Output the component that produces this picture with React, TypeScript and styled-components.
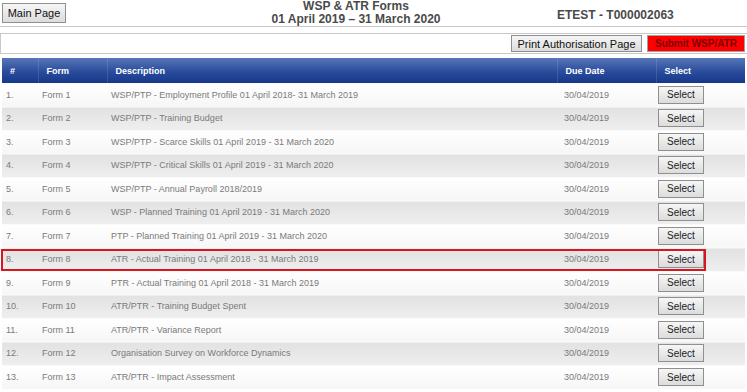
import styled, { createGlobalStyle } from 'styled-components';

const GlobalStyle = createGlobalStyle`
  body {
    margin: 0;
    background: #fff;
    font-family: "Liberation Sans", Arial, sans-serif;
  }
`;

interface FormRow {
  num: string;
  form: string;
  description: string;
  due: string;
  highlight?: boolean;
}

const rows: FormRow[] = [
  { num: '1.', form: 'Form 1', description: 'WSP/PTP - Employment Profile 01 April 2018- 31 March 2019', due: '30/04/2019' },
  { num: '2.', form: 'Form 2', description: 'WSP/PTP - Training Budget', due: '30/04/2019' },
  { num: '3.', form: 'Form 3', description: 'WSP/PTP - Scarce Skills 01 April 2019 - 31 March 2020', due: '30/04/2019' },
  { num: '4.', form: 'Form 4', description: 'WSP/PTP - Critical Skills 01 April 2019 - 31 March 2020', due: '30/04/2019' },
  { num: '5.', form: 'Form 5', description: 'WSP/PTP - Annual Payroll 2018/2019', due: '30/04/2019' },
  { num: '6.', form: 'Form 6', description: 'WSP - Planned Training 01 April 2019 - 31 March 2020', due: '30/04/2019' },
  { num: '7.', form: 'Form 7', description: 'PTP - Planned Training 01 April 2019 - 31 March 2020', due: '30/04/2019' },
  { num: '8.', form: 'Form 8', description: 'ATR - Actual Training 01 April 2018 - 31 March 2019', due: '30/04/2019', highlight: true },
  { num: '9.', form: 'Form 9', description: 'PTR - Actual Training 01 April 2018 - 31 March 2019', due: '30/04/2019' },
  { num: '10.', form: 'Form 10', description: 'ATR/PTR - Training Budget Spent', due: '30/04/2019' },
  { num: '11.', form: 'Form 11', description: 'ATR/PTR - Variance Report', due: '30/04/2019' },
  { num: '12.', form: 'Form 12', description: 'Organisation Survey on Workforce Dynamics', due: '30/04/2019' },
  { num: '13.', form: 'Form 13', description: 'ATR/PTR - Impact Assessment', due: '30/04/2019' },
];

const Page = styled.div`
  width: 747px;
  height: 392px;
  overflow: hidden;
`;

const TopBar = styled.div`
  display: grid;
  grid-template-columns: 240px 230px 1fr;
  align-items: start;
  height: 26px;
  border-bottom: 1px solid #c8c8c8;
`;

const GreyButton = styled.button`
  font-family: "Liberation Sans", Arial, sans-serif;
  font-size: 11px;
  color: #111;
  height: 18px;
  padding: 0 4px;
  white-space: nowrap;
  border: 1px solid #8f8f8f;
  border-radius: 0;
  background: linear-gradient(#f6f6f6, #dcdcdc);
  cursor: pointer;
`;

const MainButton = styled(GreyButton)`
  margin: 3px 0 0 2px;
  height: 20px;
  width: 64px;
  justify-self: start;
`;

const Title = styled.div`
  text-align: center;
  font-weight: bold;
  font-size: 12px;
  line-height: 13px;
  color: #4a4a4a;
  padding-left: 2px;
`;

const Account = styled.div`
  font-weight: bold;
  font-size: 12px;
  color: #4a4a4a;
  padding: 8px 0 0 87px;
`;

const ActionBar = styled.div`
  margin-top: 6px;
  height: 19px;
  border-top: 1px solid #c8c8c8;
  border-bottom: 1px solid #c8c8c8;
  border-left: 1px solid #c8c8c8;
  display: flex;
  justify-content: flex-end;
  align-items: center;
  gap: 5px;
  padding-right: 2px;
`;

const PrintButton = styled(GreyButton)`
  height: 17px;
  width: 131px;
  padding: 0;
`;

const SubmitButton = styled(GreyButton)`
  height: 17px;
  width: 98px;
  padding: 0;
  font-size: 10px;
  background: #ff0000;
  color: #7a0000;
  font-weight: bold;
  border-color: #a0a0a0;
`;

const Table = styled.table`
  margin: 4px 2px 0 2px;
  width: 743px;
  border-collapse: collapse;
  table-layout: fixed;
  font-size: 9px;
`;

const HeadRow = styled.tr`
  height: 25px;
  background: linear-gradient(#5676b6, #2a4c9c 55%, #17388a);
`;

const HeadCell = styled.th`
  color: #fff;
  font-weight: bold;
  text-align: left;
  padding: 1px 0 0 8px;
  border-left: 1px solid rgba(255, 255, 255, 0.12);
  &:first-child {
    border-left: none;
  }
`;

const BodyRow = styled.tr<{ $alt: boolean }>`
  height: 23.5px;
  background: ${(p) =>
    p.$alt
      ? 'linear-gradient(#e2e2e2, #efefef)'
      : 'linear-gradient(#ffffff, #f6f6f6)'};
  border-top: 1px solid #fafafa;
`;

const Cell = styled.td<{ $pad?: number }>`
  color: #7a7a7a;
  padding: 0 0 0 ${(p) => p.$pad ?? 4}px;
  white-space: nowrap;
  overflow: hidden;
`;

const FirstCell = styled(Cell)`
  position: relative;
  overflow: visible;
`;

const Highlight = styled.div`
  position: absolute;
  left: -1px;
  top: 1px;
  width: 701px;
  height: 18px;
  border: 2px solid #d9161f;
  pointer-events: none;
`;

const SelectButton = styled(GreyButton)`
  height: 18px;
  width: 46px;
  padding: 0;
  margin-left: -2px;
  font-size: 10px;
  color: #222;
`;

export default function App() {
  return (
    <Page>
      <GlobalStyle />
      <TopBar>
        <MainButton>Main Page</MainButton>
        <Title>
          WSP &amp; ATR Forms
          <br />
          01 April 2019 – 31 March 2020
        </Title>
        <Account>ETEST - T000002063</Account>
      </TopBar>
      <ActionBar>
        <PrintButton>Print Authorisation Page</PrintButton>
        <SubmitButton>Submit WSP/ATR</SubmitButton>
      </ActionBar>
      <Table>
        <colgroup>
          <col style={{ width: 36 }} />
          <col style={{ width: 69 }} />
          <col style={{ width: 450 }} />
          <col style={{ width: 99 }} />
          <col />
        </colgroup>
        <thead>
          <HeadRow>
            <HeadCell>#</HeadCell>
            <HeadCell>Form</HeadCell>
            <HeadCell>Description</HeadCell>
            <HeadCell>Due Date</HeadCell>
            <HeadCell>Select</HeadCell>
          </HeadRow>
        </thead>
        <tbody>
          {rows.map((r, i) => (
            <BodyRow key={r.num} $alt={i % 2 === 1}>
              <FirstCell>
                {r.highlight && <Highlight />}
                {r.num}
              </FirstCell>
              <Cell>{r.form}</Cell>
              <Cell>{r.description}</Cell>
              <Cell $pad={7}>{r.due}</Cell>
              <Cell>
                <SelectButton>Select</SelectButton>
              </Cell>
            </BodyRow>
          ))}
        </tbody>
      </Table>
    </Page>
  );
}
